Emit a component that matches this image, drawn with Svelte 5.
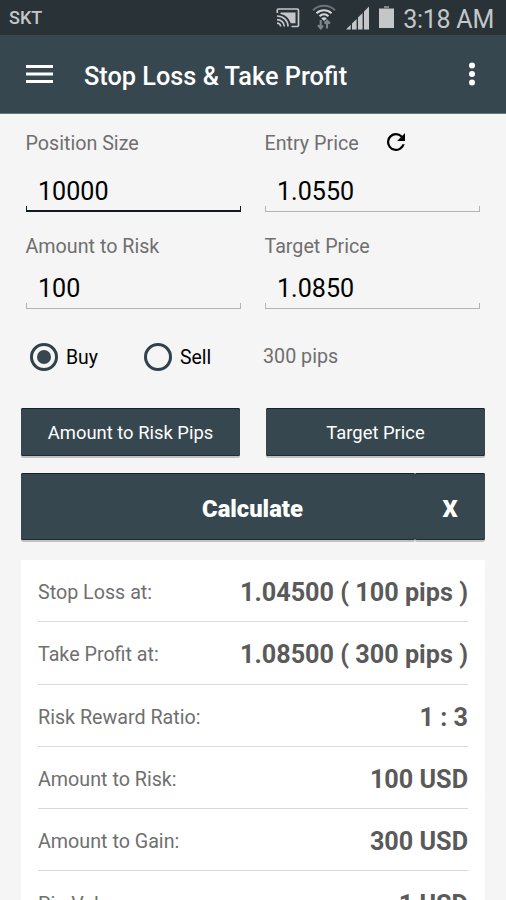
<script lang="ts">
  let positionSize = $state('10000')
  let entryPrice = $state('1.0550')
  let riskAmount = $state('100')
  let targetPrice = $state('1.0850')
  let side = $state('buy')

  const results = [
    { label: 'Stop Loss at:', value: '1.04500 ( 100 pips )' },
    { label: 'Take Profit at:', value: '1.08500 ( 300 pips )' },
    { label: 'Risk Reward Ratio:', value: '1 : 3' },
    { label: 'Amount to Risk:', value: '100 USD' },
    { label: 'Amount to Gain:', value: '300 USD' },
    { label: 'Pip Value:', value: '1 USD' },
  ]
</script>

<div class="screen">
  <div class="status">
    <span class="carrier">SKT</span>
    <svg class="cast" width="24" height="20" viewBox="0 0 24 20" fill="none" stroke="#c3c7c9" stroke-width="1.7">
      <path d="M1.3 5V2.2Q1.3 1 2.5 1H21.3Q22.5 1 22.5 2.2V17.3Q22.5 18.5 21.3 18.5H15.5" />
      <path d="M4.5 4.6H19.5V15.2H14.7C13 9.8 9.5 6.9 4.5 5.9Z" fill="#c3c7c9" stroke="none" />
      <path d="M1 8C7.2 8 12 12.4 12 18.5M1 11.6C5.2 11.6 8.3 14.6 8.3 18.5M1 15.2C3.2 15.2 4.6 16.6 4.6 18.5" />
    </svg>
    <svg class="wifi" width="24" height="26" viewBox="0 0 24 26" fill="none" stroke-width="2.1">
      <path d="M1 6.2C7.2.2 16.8.2 23 6.2" stroke="#69757b" />
      <path d="M4.5 9.3C8.8 5.3 15.2 5.3 19.5 9.3M7.5 12.2C10.1 9.8 13.9 9.8 16.5 12.2" stroke="#d3d6d7" />
      <path d="M9.2 14.2C10.8 12.8 13.2 12.8 14.8 14.2L12 17Z" fill="#d3d6d7" />
      <path d="M8.7 16V24M6 21.3L8.8 24.4L11 21.7M15 24.5V17M12.5 19.5L15 16.5L18 19.5" stroke="#7b868b" />
    </svg>
    <svg class="signal" width="24" height="24" viewBox="0 0 24 24" fill="#c3c7c9">
      <path d="M0 23.5L4.7 18.8V23.5ZM6 23.5V17.5L10.6 12.9V23.5ZM12 23.5V11.5L16.6 6.9V23.5ZM18 23.5V5.5L23 .5V23.5Z" />
    </svg>
    <svg class="battery" width="15" height="22" viewBox="0 0 15 22" fill="#c3c7c9">
      <path d="M0 2.5H15V22H0Z" />
      <path d="M5 0H10V2.5H5Z" fill="#7b868b" />
    </svg>
    <span class="clock">3:18 AM</span>
  </div>

  <header>
    <button class="icon" aria-label="Menu">
      <svg width="27" height="20" viewBox="0 0 27 20" fill="#fff">
        <path d="M0 1H27V4H0ZM0 8.4H27V11.4H0ZM0 15.9H27V18.9H0Z" />
      </svg>
    </button>
    <h1>Stop Loss &amp; Take Profit</h1>
    <button class="icon more" aria-label="More options">
      <svg width="6" height="24" viewBox="0 0 6 24" fill="#fff">
        <circle cx="3" cy="3.4" r="3" />
        <circle cx="3" cy="12" r="3" />
        <circle cx="3" cy="20.5" r="3" />
      </svg>
    </button>
  </header>

  <main>
    <div class="fields">
      <label class="field active">
        <span class="name">Position Size</span>
        <input bind:value={positionSize} />
        <i class="line"></i>
      </label>
      <label class="field">
        <span class="name">
          Entry Price
          <svg class="refresh" width="18" height="18" viewBox="4 4 16 16">
            <path d="M17.65 6.35A7.96 7.96 0 0 0 12 4a8 8 0 1 0 7.73 10h-2.08A6 6 0 1 1 12 6c1.66 0 3.14.69 4.22 1.78L13 11h7V4z" />
          </svg>
        </span>
        <input bind:value={entryPrice} />
        <i class="line"></i>
      </label>
      <label class="field low">
        <span class="name">Amount to Risk</span>
        <input bind:value={riskAmount} />
        <i class="line"></i>
      </label>
      <label class="field low">
        <span class="name">Target Price</span>
        <input bind:value={targetPrice} />
        <i class="line"></i>
      </label>
    </div>

    <div class="sides">
      <button class="radio" class:on={side === 'buy'} onclick={() => (side = 'buy')}>
        <span class="ring"></span>
        <span class="text">Buy</span>
      </button>
      <button class="radio" class:on={side === 'sell'} onclick={() => (side = 'sell')}>
        <span class="ring"></span>
        <span class="text">Sell</span>
      </button>
      <span class="pips">300 pips</span>
    </div>

    <div class="modes">
      <button class="btn">Amount to Risk Pips</button>
      <button class="btn">Target Price</button>
    </div>

    <div class="actions">
      <button class="btn calc">Calculate</button>
      <button class="btn clear">X</button>
    </div>

    <section class="card">
      {#each results as row}
        <div class="row">
          <span>{row.label}</span>
          <b>{row.value}</b>
        </div>
      {/each}
    </section>
  </main>
</div>

<style>
  :global(body) { margin: 0; }
  .screen {
    width: 506px;
    height: 900px;
    overflow: hidden;
    display: flex;
    flex-direction: column;
    background: #f5f5f5;
    color: #6f6f6f;
    font-family: Roboto, sans-serif;
    font-size: 19.7px;
  }
  button {
    border: 0;
    padding: 0;
    background: none;
    font: inherit;
    cursor: pointer;
  }
  svg { display: block; flex-shrink: 0; }

  .status {
    flex: none;
    height: 35px;
    box-sizing: border-box;
    padding: 0 12px 0 9px;
    display: flex;
    align-items: center;
    background: #283237;
    color: #c3c7c9;
  }
  .carrier { flex: 1; font-size: 18px; font-weight: 500; }
  .wifi { margin: -2px 0 0 12px; }
  .signal { margin-left: 10px; }
  .battery { margin: -1px 9px 0 9px; }
  .clock {
    padding-top: 3px;
    font-size: 25px;
    line-height: 35px;
    letter-spacing: -0.25px;
  }

  header {
    flex: none;
    height: 79px;
    box-sizing: border-box;
    border-bottom: 1px solid #6b777d;
    padding: 0 31px 0 26px;
    display: flex;
    align-items: center;
    background: #37474f;
    color: #fff;
  }
  h1 {
    flex: 1;
    margin: 5px 0 0 31px;
    font-size: 25.3px;
    font-weight: 500;
    line-height: 30px;
  }

  main { padding: 0 21px; }
  .fields {
    display: grid;
    grid-template-columns: 216px 216px;
    column-gap: 23px;
    padding: 17px 4px 0 5px;
  }
  .field { display: flex; flex-direction: column; }
  .name {
    display: flex;
    align-items: center;
    height: 24px;
    margin-left: -0.5px;
  }
  .refresh { margin: -3px 0 0 28.5px; fill: #000; }
  input {
    width: 100%;
    height: 30px;
    box-sizing: border-box;
    margin-top: 21px;
    border: 0;
    padding: 1px 12px 0;
    background: none;
    color: #000;
    font: 25.1px/29px Roboto, sans-serif;
    outline: none;
  }
  .line {
    height: 5px;
    margin: 0 1px 0 0;
    border: 1px solid #b4b4b4;
    border-top: 0;
  }
  .active .line { height: 4px; border-color: #101c22; border-bottom-width: 2px; }
  .low { padding-top: 22px; }
  .low input { margin-top: 15px; }

  .sides {
    display: flex;
    align-items: center;
    height: 28px;
    margin-top: 34px;
    padding-left: 8.5px;
  }
  .radio {
    display: flex;
    align-items: center;
    width: 114px;
    color: #000;
    font-size: 19.4px;
    line-height: 28px;
  }
  .text { padding-top: 2px; }
  .ring {
    display: flex;
    align-items: center;
    justify-content: center;
    width: 28px;
    height: 28px;
    box-sizing: border-box;
    margin-right: 8.5px;
    border: 3px solid #2f424c;
    border-radius: 50%;
  }
  .on .ring::after {
    content: '';
    width: 14px;
    height: 14px;
    border-radius: 50%;
    background: #37474f;
  }
  .pips { margin: -2px 0 0 5.5px; }

  .modes {
    display: flex;
    justify-content: space-between;
    margin-top: 37px;
  }
  .btn {
    width: 219px;
    height: 48px;
    border-radius: 2px;
    padding-top: 1px;
    background: #37474f;
    box-shadow: inset 0 1px #14232b, inset 0 -1px #1b2d36, 0 2px #c3c0c0;
    color: #fff;
    font-size: 18.4px;
    text-align: center;
  }
  .actions { display: flex; margin-top: 17px; }
  .actions .btn {
    height: 67px;
    padding-top: 5px;
    font-size: 23.8px;
    font-weight: 900;
  }
  .actions .calc { flex: 1; padding-left: 69px; }
  .actions .clear { width: 70px; }

  .card {
    margin-top: 20px;
    padding: 1px 17px 0;
    border-radius: 2px;
    background: #fff;
  }
  .row {
    display: flex;
    align-items: center;
    justify-content: space-between;
    height: 61.3px;
    padding-top: 3px;
    box-sizing: border-box;
    border-bottom: 1px solid #d9d9d9;
    margin-bottom: 1px;
  }
  .row b { color: #5a5a5a; font-size: 25.2px; font-weight: 700; }
</style>
